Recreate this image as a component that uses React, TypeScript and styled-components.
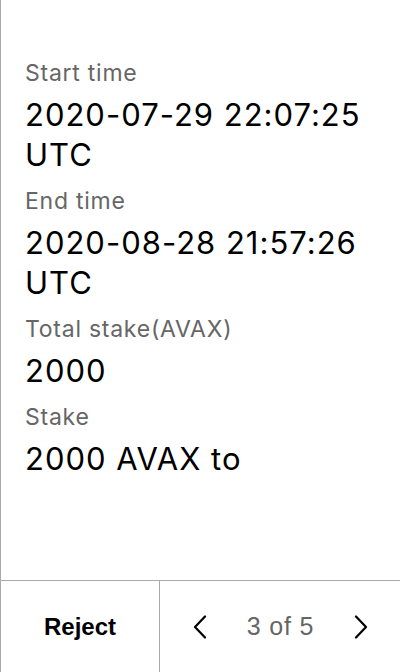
import React, { FC } from "react";
import styled, { createGlobalStyle } from "styled-components";

const GlobalStyle = createGlobalStyle`
  html, body {
    margin: 0;
    padding: 0;
    background: #fff;
  }
  * {
    box-sizing: border-box;
  }
`;

const Screen = styled.div`
  width: 400px;
  height: 672px;
  display: flex;
  flex-direction: column;
  border-left: 1px solid #aaa;
  font-family: Inter, "Noto Sans", sans-serif;
  background: #fff;
`;

const Details = styled.div`
  flex: 1;
  padding: 47px 24px 0 24px;
  overflow: hidden;
`;

const Label = styled.div`
  margin-top: 12px;
  font-size: 23px;
  line-height: 28px;
  letter-spacing: 0.75px;
  color: #666;
`;

const Value = styled.div`
  margin-top: 8px;
  font-size: 31px;
  line-height: 40px;
  letter-spacing: 1px;
  color: #000;
`;

const Footer = styled.div`
  height: 92px;
  display: grid;
  grid-template-columns: 159px 1fr;
  border-top: 1px solid #aaa;
`;

const RejectButton = styled.button`
  border: none;
  border-right: 1px solid #aaa;
  background: none;
  padding: 0;
  font-family: "Liberation Sans", Arial, sans-serif;
  font-weight: bold;
  font-size: 24px;
  color: #000;
  cursor: pointer;
`;

const Pager = styled.div`
  display: flex;
  align-items: center;
  justify-content: space-between;
  padding: 0 30px 0 31px;
`;

const PageCount = styled.span`
  font-family: "Liberation Sans", Arial, sans-serif;
  font-size: 25px;
  letter-spacing: 0.8px;
  color: #666;
`;

const ArrowButton = styled.button`
  border: none;
  background: none;
  padding: 0;
  width: 18px;
  height: 24px;
  display: flex;
  align-items: center;
  justify-content: center;
  cursor: pointer;
`;

const Chevron: FC<{ dir: "left" | "right" }> = ({ dir }) => (
  <svg width="16" height="24" viewBox="0 0 16 24" fill="none">
    <polyline
      points={dir === "left" ? "13,1.5 3,12 13,22.5" : "3,1.5 13,12 3,22.5"}
      stroke="#000"
      strokeWidth="2.2"
      strokeLinecap="round"
      strokeLinejoin="round"
    />
  </svg>
);

const rows = [
  { label: "Start time", value: "2020-07-29 22:07:25 UTC" },
  { label: "End time", value: "2020-08-28 21:57:26 UTC" },
  { label: "Total stake(AVAX)", value: "2000" },
  { label: "Stake", value: "2000 AVAX to" },
];

const App: FC = () => {
  return (
    <>
      <GlobalStyle />
      <Screen>
        <Details>
          {rows.map((r) => (
            <React.Fragment key={r.label}>
              <Label>{r.label}</Label>
              <Value>{r.value}</Value>
            </React.Fragment>
          ))}
        </Details>
        <Footer>
          <RejectButton type="button">Reject</RejectButton>
          <Pager>
            <ArrowButton type="button">
              <Chevron dir="left" />
            </ArrowButton>
            <PageCount>3 of 5</PageCount>
            <ArrowButton type="button">
              <Chevron dir="right" />
            </ArrowButton>
          </Pager>
        </Footer>
      </Screen>
    </>
  );
};

export default App;
